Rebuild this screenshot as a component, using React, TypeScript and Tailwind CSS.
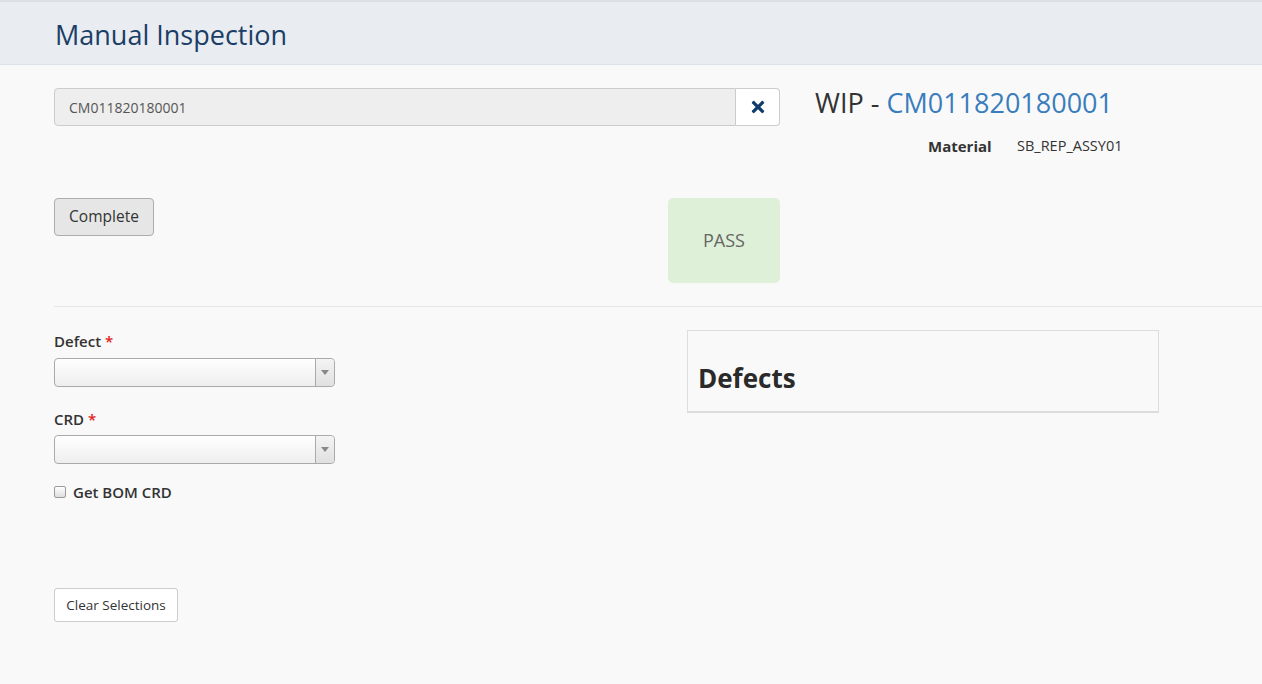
import { FaTimes } from 'react-icons/fa'

const font = { fontFamily: '"Open Sans", "Noto Sans", sans-serif' }

function Select() {
    return (
        <div className="flex h-[29px] w-[281px] rounded-[4px] border border-[#aaaaaa] bg-gradient-to-b from-white to-[#eeeeee]">
            <div className="flex-1" />
            <div className="flex w-[19px] items-center justify-center rounded-r-[4px] border-l border-[#aaaaaa] bg-gradient-to-b from-[#f4f4f4] to-[#e0e0e0]">
                <span className="block h-0 w-0 border-x-[4px] border-t-[5px] border-x-transparent border-t-[#888888]" />
            </div>
        </div>
    )
}

export default function App() {
    return (
        <div className="min-h-[684px] bg-[#f9f9f9] text-[#333333]" style={font}>
            <div className="h-[65px] border-t-2 border-b border-t-[#dcdfe4] border-b-[#dde2ea] bg-[#e9ecf1] px-[55px] pt-[16px]">
                <h1 className="text-[27px] leading-[34px] text-[#1b3e66]">Manual Inspection</h1>
            </div>

            <div className="pl-[54px]">
                <div className="flex pt-[23px]">
                    <div className="w-[726px]">
                        <div className="flex h-[38px]">
                            <div className="flex flex-1 items-center rounded-l-[4px] border border-[#cccccc] bg-[#eeeeee] pl-[14px] text-[14px] text-[#555555]">
                                CM011820180001
                            </div>
                            <button className="flex w-[44px] items-center justify-center rounded-r-[4px] border border-l-0 border-[#cccccc] bg-white text-[#0f3d6b]">
                                <FaTimes size={18} />
                            </button>
                        </div>
                    </div>
                    <div className="ml-[35px] flex-1">
                        <div className="mt-[-1px] text-[27px] leading-[32px]">
                            WIP - <span className="text-[#3a7dbd]">CM011820180001</span>
                        </div>
                        <div className="mt-[17px] flex text-[15px] leading-[20px]">
                            <span className="ml-[113px] w-[89px] font-bold">Material</span>
                            <span className="text-[14.5px]">SB_REP_ASSY01</span>
                        </div>
                    </div>
                </div>

                <div className="mt-[42px] flex w-[726px] items-start justify-between">
                    <button className="h-[38px] w-[100px] rounded-[4px] border border-[#adadad] bg-[#e6e6e6] text-[15.5px] text-[#333333]">
                        Complete
                    </button>
                    <div className="flex h-[85px] w-[112px] items-center justify-center rounded-[5px] bg-[#dff0d8] text-[18px] text-[#666666]">
                        PASS
                    </div>
                </div>

                <div className="mt-[23px] border-t border-[#e6e6e6]" />

                <div className="flex pt-[23px]">
                    <div className="w-[633px]">
                        <label className="block text-[15px] font-semibold leading-[22px]">
                            Defect <span className="text-[#e02020]">*</span>
                        </label>
                        <div className="mt-[6px]"><Select /></div>
                        <label className="mt-[21px] block text-[15px] font-semibold leading-[22px]">
                            CRD <span className="text-[#e02020]">*</span>
                        </label>
                        <div className="mt-[5px]"><Select /></div>
                        <div className="mt-[18px] flex items-center">
                            <span className="h-[12px] w-[12px] rounded-[2px] border border-[#999999] bg-gradient-to-b from-white to-[#dddddd]" />
                            <span className="ml-[7px] text-[15px] font-semibold leading-[20px]">Get BOM CRD</span>
                        </div>
                        <button className="mt-[86px] h-[34px] w-[124px] rounded-[3px] border border-[#cccccc] bg-white text-[13.5px] text-[#333333]">
                            Clear Selections
                        </button>
                    </div>
                    <div className="h-[83px] w-[472px] border border-b-2 border-[#dddddd] px-[10px] pt-[30px]">
                        <h2 className="text-[26px] font-bold leading-[34px] text-[#2a2a2a]">Defects</h2>
                    </div>
                </div>
            </div>
        </div>
    )
}
